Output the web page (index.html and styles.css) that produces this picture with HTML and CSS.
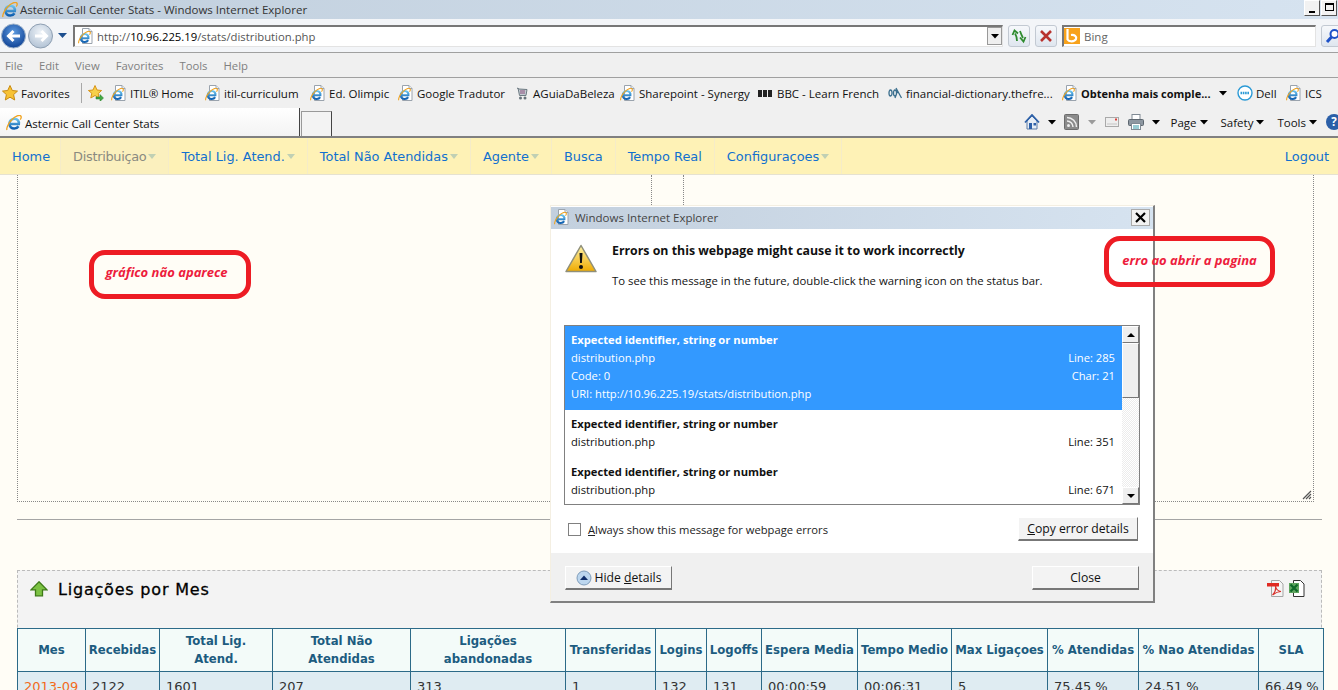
FILE: index.html
```html
<!DOCTYPE html>
<html>
<head>
    <meta charset="utf-8">
    <title>Asternic Call Center Stats</title>
    <link rel="stylesheet" href="styles.css">
</head>
<body>
    <svg class="defs" width="0" height="0">
        <defs>
            <linearGradient id="blue_e" x1="0" y1="0" x2="0" y2="1">
                <stop offset="0" stop-color="#6cc4ee"/>
                <stop offset="1" stop-color="#0f5fb0"/>
            </linearGradient>
            <symbol id="ie_e" viewBox="0 0 16 16">
                <path d="M3.200 9h9.600c.5-3-1.400-5.300-4.300-5.300C5.600 3.700 3.400 6 3.400 8.800c0 2.900 2.200 4.700 4.900 4.700 1.900 0 3.300-.8 4.200-2.200" fill="none" stroke="url(#blue_e)" stroke-width="2.600"/>
                <path d="M1 15c-1-1.500 1.500-7 5-10.500C9.500 1 13.500-.5 14.800 1c.8 1 .2 2.500-.6 3.600" fill="none" stroke="#f0a21e" stroke-width="1.300"/>
            </symbol>
            <symbol id="ie_page" viewBox="0 0 16 16">
                <path d="M4.500.5h6.500l3 3v12h-9.500z" fill="#fff" stroke="#9aa3ad"/>
                <path d="M11 .5v3h3" fill="#e8edf2" stroke="#9aa3ad"/>
                <use href="#ie_e" x="0" y="3" width="13" height="13"/>
            </symbol>
            <symbol id="caret" viewBox="0 0 8 5">
                <path d="M0 0h8L4 4.500z" fill="#000"/>
            </symbol>
        </defs>
    </svg>

    <div class="titlebar">
        <svg class="ico16 title-ico"><use href="#ie_e"/></svg>
        <span class="title-text">Asternic Call Center Stats - Windows Internet Explorer</span>
        <div class="winbtns">
            <span class="winbtn"><i class="min-mark"></i></span>
            <span class="winbtn"><i class="restore-mark"></i></span>
        </div>
    </div>

    <div class="addressbar">
        <svg class="nav-arrows" width="72" height="30" viewBox="0 0 72 30">
            <defs>
                <radialGradient id="back_fill" cx=".5" cy=".35" r=".7">
                    <stop offset="0" stop-color="#5d9be0"/>
                    <stop offset="1" stop-color="#0b3d91"/>
                </radialGradient>
                <radialGradient id="fwd_fill" cx=".5" cy=".35" r=".7">
                    <stop offset="0" stop-color="#eef3f8"/>
                    <stop offset="1" stop-color="#aebfd2"/>
                </radialGradient>
            </defs>
            <circle cx="12.500" cy="15" r="12" fill="url(#back_fill)" stroke="#9fb3c9"/>
            <path d="M19 15H8m4.500-5L7.500 15l5 5" fill="none" stroke="#fff" stroke-width="3"/>
            <circle cx="39.500" cy="15" r="12" fill="url(#fwd_fill)" stroke="#8e9fb2"/>
            <path d="M34 15h11m-4.500-5l5 5-5 5" fill="none" stroke="#fff" stroke-width="3"/>
            <path d="M57 12h9l-4.500 5z" fill="#1d4f8f"/>
        </svg>
        <div class="urlbox">
            <svg class="ico16"><use href="#ie_page"/></svg>
            <span class="url"><span class="url-dim">http://</span>10.96.225.19<span class="url-dim">/stats/distribution.php</span></span>
            <span class="combo-btn"><svg width="8" height="5"><use href="#caret"/></svg></span>
        </div>
        <span class="toolbtn">
            <svg width="16" height="16" viewBox="0 0 16 16"><path d="M6 13C6 9 5 7 4 5.500M1.500 7L3.500 2.500 7 5.500M9 3c1 3 2 5 3 7M9 9.500l3.500 4 2-4.500" fill="none" stroke="#2e8b2e" stroke-width="1.800"/></svg>
        </span>
        <span class="toolbtn">
            <svg width="14" height="14" viewBox="0 0 14 14"><path d="M2 2l10 10M12 2L2 12" stroke="#b8322e" stroke-width="2.600"/></svg>
        </span>
        <div class="searchbox">
            <span class="bing-logo">
                <svg width="16" height="16" viewBox="0 0 16 16"><path d="M3.500 1v10.500c1.500 2.500 7 2.500 8.500-.5 1-2.500-1.500-4.500-5-4" fill="none" stroke="#fff" stroke-width="2.200"/></svg>
            </span>
            <span class="bing-text">Bing</span>
        </div>
        <span class="toolbtn go-btn">
            <svg width="16" height="16" viewBox="0 0 16 16"><circle cx="9.500" cy="6" r="4" fill="#fff" stroke="#1c50c8" stroke-width="2"/><path d="M6.500 9L2 14" stroke="#1c50c8" stroke-width="3"/></svg>
        </span>
    </div>

    <div class="menubar">
        <span>File</span><span>Edit</span><span>View</span><span>Favorites</span><span>Tools</span><span>Help</span>
    </div>

    <div class="favbar">
        <span class="fav">
            <svg class="ico16" viewBox="0 0 16 16"><path d="M8 .5l2.300 5 5.200.6-3.900 3.500 1.100 5.400L8 12.200 3.300 15l1.100-5.400L.5 6.100l5.200-.6z" fill="#f7c234" stroke="#c98a10"/></svg>
            <span>Favorites</span>
        </span>
        <span class="fav-sep"></span>
        <svg class="ico16" viewBox="0 0 16 16"><path d="M7 .5l2 4.500 4.600.5-3.400 3.100 1 4.800L7 10.500 2.800 13l1-4.800L.4 5.500 5 5z" fill="#f7d04a" stroke="#d89418"/><path d="M8 12h4v-2.500l3.500 3.500-3.500 3.500V14H8z" fill="#43a843" stroke="#2b7a2b" stroke-width=".5"/></svg>
        <span class="fav"><svg class="ico16"><use href="#ie_page"/></svg><span>ITIL® Home</span></span>
        <span class="fav"><svg class="ico16"><use href="#ie_page"/></svg><span>itil-curriculum</span></span>
        <span class="fav"><svg class="ico16"><use href="#ie_page"/></svg><span>Ed. Olimpic</span></span>
        <span class="fav"><svg class="ico16"><use href="#ie_page"/></svg><span>Google Tradutor</span></span>
        <span class="fav">
            <svg class="ico16" viewBox="0 0 16 16"><path d="M3 3l2 1 8 .5-1 6H5.500L4 3" fill="#c3ccd2" stroke="#6d7a82"/><path d="M6 6h5M6 8h5" stroke="#8c4f7e"/><circle cx="6.500" cy="13" r="1.500" fill="#66727a"/><circle cx="11" cy="13" r="1.500" fill="#66727a"/></svg>
            <span>AGuiaDaBeleza</span>
        </span>
        <span class="fav"><svg class="ico16"><use href="#ie_page"/></svg><span>Sharepoint - Synergy</span></span>
        <span class="fav">
            <span class="bbc"><i></i><i></i><i></i></span>
            <span>BBC - Learn French</span>
        </span>
        <span class="fav">
            <svg class="ico16" viewBox="0 0 16 16"><path d="M3.500 5c-2 0-2 6 0 6s2-6 0-6zM8 5C6 5 6 11 8 11s2-6 0-6zM9 3l5.500 10M10.500 6L8 13" fill="none" stroke="#3b6f8e" stroke-width="1.300"/></svg>
            <span>financial-dictionary.thefre...</span>
        </span>
        <span class="fav"><svg class="ico16"><use href="#ie_page"/></svg><strong>Obtenha mais comple...</strong></span>
        <svg class="caret" width="8" height="5"><use href="#caret"/></svg>
        <span class="fav">
            <svg class="ico16" viewBox="0 0 16 16"><circle cx="8" cy="8" r="7" fill="#fff" stroke="#2a9ad6" stroke-width="1.400"/><path d="M3.500 8h9" stroke="#2a9ad6" stroke-width="2.400" stroke-dasharray="1.600 .7"/></svg>
            <span>Dell</span>
        </span>
        <span class="fav"><svg class="ico16"><use href="#ie_page"/></svg><span>ICS</span></span>
    </div>

    <div class="tabbar">
        <div class="tab">
            <svg class="ico16"><use href="#ie_e"/></svg>
            <span>Asternic Call Center Stats</span>
        </div>
        <div class="newtab"></div>
        <div class="commands">
            <svg class="ico16 cmd-ico" viewBox="0 0 16 16"><path d="M3 7v8h10V7L8 2z" fill="#e6edf5" stroke="#5a7ba5"/><path d="M1 8.500l7-7.500 7 7.500" fill="none" stroke="#2d60a8" stroke-width="1.800"/><rect x="5" y="9" width="3" height="6" fill="#2d60a8"/><rect x="9.500" y="9" width="2.500" height="2.500" fill="#2d60a8"/></svg>
            <svg class="caret" width="8" height="5"><use href="#caret"/></svg>
            <svg class="ico16 cmd-ico" viewBox="0 0 16 16"><rect x=".5" y=".5" width="14" height="15" rx="1" fill="#8b8b8b" stroke="#6c6c6c"/><circle cx="4.500" cy="11.500" r="1.500" fill="#eee"/><path d="M3 7a6 6 0 0 1 6 6M3 3.500A9.500 9.500 0 0 1 12.500 13" fill="none" stroke="#eee" stroke-width="1.500"/></svg>
            <svg class="caret caret-off" width="8" height="5"><use href="#caret"/></svg>
            <svg class="ico16 cmd-ico" viewBox="0 0 16 16"><rect x="1.500" y="3.500" width="13" height="9" fill="#eee" stroke="#a9a9a9"/><path d="M3 10h10" stroke="#c4c4c4"/><rect x="11" y="4.500" width="2" height="2" fill="#d8403a"/></svg>
            <svg class="ico16 cmd-ico" viewBox="0 0 16 16"><rect x="4" y=".5" width="8" height="5" fill="#fff" stroke="#808a94"/><rect x=".5" y="5.500" width="15" height="6" rx="1" fill="#8d97a1" stroke="#5d666f"/><rect x="3.500" y="9.500" width="9" height="6" fill="#fff" stroke="#808a94"/><path d="M5 12h6M5 14h6" stroke="#39a"/></svg>
            <svg class="caret" width="8" height="5"><use href="#caret"/></svg>
            <span class="cmd cmd-first">Page<svg class="caret" width="8" height="5"><use href="#caret"/></svg></span>
            <span class="cmd">Safety<svg class="caret" width="8" height="5"><use href="#caret"/></svg></span>
            <span class="cmd">Tools<svg class="caret" width="8" height="5"><use href="#caret"/></svg></span>
            <span class="help-ico">?</span>
        </div>
    </div>

    <nav class="topnav">
        <a class="nav-item nav-home" href="#">Home</a>
        <a class="nav-item nav-off has-sub" href="#">Distribuiçao</a>
        <a class="nav-item has-sub" href="#">Total Lig. Atend.</a>
        <a class="nav-item has-sub" href="#">Total Não Atendidas</a>
        <a class="nav-item has-sub" href="#">Agente</a>
        <a class="nav-item" href="#">Busca</a>
        <a class="nav-item" href="#">Tempo Real</a>
        <a class="nav-item has-sub" href="#">Configuraçoes</a>
        <a class="logout" href="#">Logout</a>
    </nav>

    <div class="page">
        <div class="chart-box">
            <div class="chart-tab"></div>
            <svg class="grip" width="10" height="10" viewBox="0 0 10 10"><path d="M9 1L1 9M9 4L4 9M9 7L7 9" stroke="#555" stroke-width="1.200"/></svg>
        </div>
        <hr class="divider">
        <section class="panel">
            <div class="panel-head">
                <svg class="up-ico" width="18" height="16" viewBox="0 0 18 16"><path d="M9 .8l8 8h-4.500v6h-7v-6H1z" fill="#7cc243" stroke="#3d7a16" stroke-width="1.300"/></svg>
                <h2>Ligações por Mes</h2>
                <div class="export">
                    <svg width="17" height="17" viewBox="0 0 17 17"><path d="M4.500.5h8l3.500 3.500v12.500H4.500z" fill="#f4f4f4" stroke="#a5a5a5"/><rect x="0" y="3" width="12" height="3.500" fill="#e02a22"/><path d="M5.500 15c2-2 3.500-6 3-9 .5 3 2.500 5 5.500 5.500-3 0-6 1.500-8.500 3.500z" fill="none" stroke="#d8322c" stroke-width="1.200"/></svg>
                    <svg width="17" height="17" viewBox="0 0 17 17"><path d="M5.500.5h7l3.500 3.500v12.500H5.500z" fill="#fff" stroke="#333"/><rect x="1" y="3" width="10" height="10" fill="#5fa55f"/><path d="M2.500 4.500l7 7M9.500 4.500l-7 7" stroke="#0f6a2a" stroke-width="2.200"/></svg>
                </div>
            </div>
            <table class="stats">
                <colgroup>
                    <col class="c-mes"><col class="c-rec"><col class="c-tot"><col class="c-nao"><col class="c-aba"><col class="c-tra"><col class="c-log"><col class="c-off"><col class="c-esp"><col class="c-tem"><col class="c-max"><col class="c-ate"><col class="c-pna"><col class="c-sla">
                </colgroup>
                <thead>
                    <tr>
                        <th>Mes</th><th>Recebidas</th><th>Total Lig.<br>Atend.</th><th>Total Não<br>Atendidas</th><th>Ligações<br>abandonadas</th><th>Transferidas</th><th>Logins</th><th>Logoffs</th><th>Espera Media</th><th>Tempo Medio</th><th>Max Ligaçoes</th><th>% Atendidas</th><th>% Nao Atendidas</th><th>SLA</th>
                    </tr>
                </thead>
                <tbody>
                    <tr>
                        <td class="month">2013-09</td><td>2122</td><td>1601</td><td>207</td><td>313</td><td>1</td><td>132</td><td>131</td><td>00:00:59</td><td>00:06:31</td><td>5</td><td>75.45 %</td><td>24.51 %</td><td>66.49 %</td>
                    </tr>
                </tbody>
            </table>
        </section>
    </div>

    <div class="note note-chart">gráfico não aparece</div>

    <div class="dialog">
        <div class="dlg-title">
            <svg class="ico16"><use href="#ie_page"/></svg>
            <span>Windows Internet Explorer</span>
            <span class="dlg-close">
                <svg width="11" height="11" viewBox="0 0 11 11"><path d="M1 1l9 9M10 1l-9 9" stroke="#000" stroke-width="2.200"/></svg>
            </span>
        </div>
        <div class="dlg-body">
            <div class="dlg-msg">
                <svg class="warn" width="32" height="30" viewBox="0 0 32 30">
                    <defs>
                        <linearGradient id="warn_fill" x1="0" y1="0" x2="0" y2="1">
                            <stop offset="0" stop-color="#fff3a8"/>
                            <stop offset="1" stop-color="#eeaa00"/>
                        </linearGradient>
                    </defs>
                    <path d="M16 1.500L31 27.500H1z" fill="url(#warn_fill)" stroke="#8f8f7a" stroke-linejoin="round" stroke-width="1.500"/>
                    <path d="M14.500 9h3l-.6 10h-1.800z" fill="#111"/>
                    <circle cx="16" cy="23" r="2" fill="#111"/>
                </svg>
                <div>
                    <h3>Errors on this webpage might cause it to work incorrectly</h3>
                    <p>To see this message in the future, double-click the warning icon on the status bar.</p>
                </div>
            </div>
            <div class="err-list">
                <div class="err-items">
                    <div class="err err-sel">
                        <b>Expected identifier, string or number</b>
                        <div class="err-row"><span>distribution.php</span><span>Line: 285</span></div>
                        <div class="err-row"><span>Code: 0</span><span>Char: 21</span></div>
                        <div class="err-row"><span>URI: http://10.96.225.19/stats/distribution.php</span></div>
                    </div>
                    <div class="err">
                        <b>Expected identifier, string or number</b>
                        <div class="err-row"><span>distribution.php</span><span>Line: 351</span></div>
                    </div>
                    <div class="err">
                        <b>Expected identifier, string or number</b>
                        <div class="err-row"><span>distribution.php</span><span>Line: 671</span></div>
                    </div>
                </div>
                <div class="scrollbar">
                    <span class="sb-btn"><i class="sb-up"></i></span>
                    <span class="sb-thumb"></span>
                    <span class="sb-track"></span>
                    <span class="sb-btn"><i class="sb-down"></i></span>
                </div>
            </div>
            <div class="dlg-opts">
                <span class="check"></span>
                <span class="check-label"><u>A</u>lways show this message for webpage errors</span>
                <button class="btn btn-copy" type="button"><u>C</u>opy error details</button>
            </div>
        </div>
        <div class="dlg-foot">
            <button class="btn btn-hide" type="button">
                <svg width="16" height="16" viewBox="0 0 16 16"><circle cx="8" cy="8" r="7" fill="#bcd6ee" stroke="#7f9dbb"/><path d="M4 10l4-4.500 4 4.500z" fill="#0f2f6b"/></svg>
                <span>Hide <u>d</u>etails</span>
            </button>
            <button class="btn btn-close" type="button">Close</button>
        </div>
    </div>

    <div class="note note-open">erro ao abrir a pagina</div>
</body>
</html>
```

FILE: styles.css
```css
* {
    box-sizing: border-box;
}

html, body {
    margin: 0;
    height: 690px;
    overflow: hidden;
}

body {
    position: relative;
    font-family: "Open Sans", "Noto Sans", sans-serif;
    font-size: 11.5px;
    color: #111;
    background-color: #f0f0f0;
}

.defs {
    position: absolute;
}

.ico16 {
    width: 16px;
    height: 16px;
    flex: none;
}

.caret {
    flex: none;
}

/* window chrome */
.titlebar {
    display: flex;
    align-items: center;
    height: 19px;
    padding-left: 2px;
    background: linear-gradient(to right, #c1cfdd, #d6e3f0);
}

.title-text {
    margin-left: 2px;
    color: #333;
}

.winbtns {
    display: flex;
    margin-left: auto;
    align-self: flex-start;
}

.winbtn {
    position: relative;
    display: block;
    width: 16px;
    height: 16px;
    margin-right: 1px;
    background: #f2f2f2;
    border: 1px solid #fff;
    border-right-color: #555;
    border-bottom-color: #555;
}

.min-mark {
    position: absolute;
    left: 4px;
    bottom: 2px;
    width: 6px;
    height: 2px;
    background: #000;
}

.restore-mark {
    position: absolute;
    left: 3px;
    top: 2px;
    width: 9px;
    height: 8px;
    border: 1px solid #000;
    border-top-width: 2px;
}

.addressbar {
    display: flex;
    align-items: center;
    height: 34px;
    padding-left: 1px;
    overflow: hidden;
    background: #f3f5f8;
    border-bottom: 1px solid #a0a0a0;
}

.nav-arrows {
    flex: none;
    width: 72px;
}

.urlbox {
    display: flex;
    align-items: center;
    flex: none;
    width: 930px;
    height: 22px;
    padding-left: 3px;
    background: #fff;
    border: 1px solid #e3e3e3;
    border-top: 2px solid #777;
    border-left: 2px solid #777;
}

.url {
    margin-left: 3px;
    font-size: 11.3px;
    color: #000;
}

.url-dim {
    color: #555;
}

.combo-btn {
    display: flex;
    align-items: center;
    justify-content: center;
    width: 15px;
    height: 18px;
    margin-left: auto;
    background: #efefef;
    border: 1px solid #999;
}

.toolbtn {
    display: flex;
    align-items: center;
    justify-content: center;
    flex: none;
    width: 22px;
    height: 22px;
    margin-left: 5px;
    background: linear-gradient(#f6f8fb, #dfe6ef);
    border: 1px solid #c2c9d2;
    border-radius: 3px;
}

.searchbox {
    display: flex;
    align-items: center;
    flex: none;
    width: 254px;
    height: 22px;
    margin-left: 5px;
    background: #fff;
    border: 1px solid #e3e3e3;
    border-top: 2px solid #777;
    border-left: 2px solid #777;
}

.bing-logo {
    display: flex;
    width: 16px;
    height: 16px;
    background: #f8a21b;
}

.bing-text {
    margin-left: 4px;
    color: #666;
}

.go-btn {
    width: 24px;
}

.menubar {
    display: flex;
    align-items: center;
    gap: 16px;
    height: 25px;
    padding-left: 5px;
    font-size: 11.3px;
    color: #808080;
    border-bottom: 1px solid #a0a0a0;
}

.favbar {
    display: grid;
    grid-template-columns: 79px 7px 23px 94px 105px 88px 116px 106px 138px 129px 175px 157px 18px 49px 50px;
    align-items: center;
    height: 30px;
    padding-left: 2px;
    white-space: nowrap;
}

.favbar strong {
    font-size: 11px;
}

.fav {
    display: flex;
    align-items: center;
    gap: 3px;
}

.fav-sep {
    width: 1px;
    height: 20px;
    background: #a8a8a8;
}

.bbc {
    display: flex;
    gap: 1px;
    width: 16px;
}

.bbc i {
    width: 4px;
    height: 7px;
    background: #222;
}

.tabbar {
    display: flex;
    align-items: flex-end;
    height: 30px;
    border-bottom: 2px solid #808080;
}

.tab {
    display: flex;
    align-items: center;
    gap: 3px;
    width: 300px;
    height: 28px;
    padding-top: 2px;
    padding-left: 6px;
    background: linear-gradient(#fff, #f3f3f3);
    border-right: 1px solid #444;
}

.newtab {
    width: 31px;
    height: 25px;
    margin-left: 1px;
    background: #f3f3f3;
    border: 1px solid #999;
    border-right-color: #444;
    border-bottom: 0;
}

.commands {
    display: flex;
    align-items: center;
    height: 28px;
    margin-left: auto;
    gap: 8px;
}

.cmd {
    display: flex;
    align-items: center;
    gap: 3px;
    margin-left: 5px;
}

.cmd-first {
    margin-left: 3px;
}

.help-ico {
    width: 16px;
    height: 16px;
    margin-right: -4px;
    margin-left: 1px;
    color: #fff;
    font-weight: bold;
    text-align: center;
    line-height: 16px;
    background: #2b5fa8;
    border-radius: 50%;
}

.caret-off {
    opacity: .35;
}

/* site nav */
.topnav {
    display: flex;
    height: 37px;
    font-family: "DejaVu Sans", sans-serif;
    font-size: 12.9px;
    background: #fef2b6;
    border-bottom: 1px solid #e6e2d0;
}

.topnav a {
    color: #1170cf;
    text-decoration: none;
}

.nav-item {
    display: flex;
    align-items: center;
    padding: 0 12px;
    border-right: 1px solid #f5ecc8;
}

.topnav .nav-home {
    padding-right: 10px;
}

.topnav .nav-off {
    color: #8a8a80;
    letter-spacing: -.3px;
    background: #fbf0be;
}

.has-sub::after {
    content: "";
    margin-left: 2px;
    border: 4px solid transparent;
    border-top: 5px solid #c0d0b4;
    border-bottom: 0;
}

.topnav .logout {
    align-self: center;
    margin-left: auto;
    margin-right: 9px;
}

/* page body */
.page {
    padding: 0 16px 0 17px;
    background: #fffdf6;
    height: 516px;
}

.chart-box {
    position: relative;
    height: 327px;
    margin-right: 8px;
    border: 1px dotted #888;
    border-top: 0;
}

.chart-tab {
    width: 33px;
    height: 30px;
    margin-left: 633px;
    border-left: 1px dotted #888;
    border-right: 1px dotted #888;
}

.grip {
    position: absolute;
    right: 1px;
    bottom: 1px;
}

.divider {
    height: 0;
    margin: 17px 0 50px;
    border: 0;
    border-top: 1px solid #a5a5a5;
}

.panel {
    background: #f3f3f3;
    border-top: 1px dashed #bbb;
    border-left: 1px dashed #bbb;
    border-right: 1px dashed #bbb;
}

.panel-head {
    display: flex;
    align-items: center;
    height: 57px;
    padding: 0 16px 21px 12px;
}

.panel-head h2 {
    margin: 0 0 0 10px;
    font-family: "DejaVu Sans", sans-serif;
    font-size: 16px;
    font-weight: normal;
    letter-spacing: .8px;
    color: #000;
    -webkit-text-stroke: .3px #000;
}

.export {
    display: flex;
    gap: 4px;
    margin-left: auto;
    margin-top: -2px;
}

.stats {
    width: 1306px;
    margin-left: -1px;
    table-layout: fixed;
    border-collapse: collapse;
    font-family: "DejaVu Sans", sans-serif;
    font-size: 13px;
}

.stats th, .stats td {
    border: 1px solid #2c6a88;
}

.stats th {
    height: 43px;
    padding: 0;
    font-size: 11.7px;
    line-height: 18px;
    color: #1c5c80;
    background: #f3fbf9;
}

.stats td {
    height: 30px;
    padding: 0 6px;
    color: #333;
    background: #dfecf2;
    white-space: nowrap;
}

.stats .month {
    color: #f26a1b;
}

.c-mes { width: 68px; }
.c-rec { width: 74px; }
.c-tot { width: 113px; }
.c-nao { width: 138px; }
.c-aba { width: 155px; }
.c-tra { width: 90px; }
.c-log { width: 51px; }
.c-off { width: 55px; }
.c-esp { width: 96px; }
.c-tem { width: 94px; }
.c-max { width: 96px; }
.c-ate { width: 91px; }
.c-pna { width: 120px; }
.c-sla { width: 65px; }

/* hand drawn notes on the screenshot */
.note {
    position: absolute;
    display: flex;
    align-items: center;
    justify-content: center;
    font-family: "Open Sans", sans-serif;
    font-size: 13px;
    font-style: italic;
    font-weight: bold;
    color: #ed1c3c;
    border: 5px solid #ed1c24;
    border-radius: 16px;
}

.note-chart {
    left: 89px;
    top: 250px;
    width: 162px;
    height: 49px;
    padding-bottom: 5px;
    padding-right: 7px;
}

.note-open {
    left: 1104px;
    top: 236px;
    width: 171px;
    height: 51px;
    padding-bottom: 3px;
}

/* error dialog */
.dialog {
    position: absolute;
    left: 550px;
    top: 205px;
    width: 605px;
    height: 398px;
    background: #fff;
    border: 1px solid #f4efe2;
    border-right: 2px solid #808080;
    border-bottom: 2px solid #808080;
}

.dlg-title {
    display: flex;
    align-items: center;
    gap: 5px;
    height: 22px;
    margin-top: 1px;
    padding-left: 3px;
    padding-bottom: 2px;
    color: #444;
    background: linear-gradient(to right, #c3d0de, #d6e3f0);
}

.dlg-close {
    display: flex;
    align-items: center;
    justify-content: center;
    width: 19px;
    height: 17px;
    margin-left: auto;
    margin-right: 3px;
    background: #f2f2f2;
    border: 1px solid #aaa;
}

.dlg-body {
    height: 324px;
    padding: 0 14px 0 13px;
}

.dlg-msg {
    display: flex;
    height: 96px;
    padding-top: 14px;
    padding-left: 1px;
}

.warn {
    flex: none;
    margin-top: 1px;
    margin-right: 15px;
}

.dlg-msg h3 {
    margin: 0 0 14px;
    font-size: 12.35px;
    line-height: 16px;
}

.dlg-msg p {
    margin: 0;
    font-size: 11.35px;
    line-height: 16px;
}

.err-list {
    display: flex;
    width: 576px;
    height: 180px;
    border: 1px solid #808080;
    overflow: hidden;
}

.err-items {
    flex: 1;
    font-size: 11.2px;
    line-height: 18px;
}

.err {
    padding: 5px 7px 7px 6px;
}

.err-sel {
    height: 84px;
    padding-bottom: 0;
    color: #fff;
    background: #3399ff;
}

.err b {
    display: block;
    font-size: 11.2px;
}

.err-row {
    display: flex;
    justify-content: space-between;
}

.scrollbar {
    display: flex;
    flex-direction: column;
    width: 17px;
    background: #f4f4f4;
}

.sb-btn, .sb-thumb {
    display: flex;
    align-items: center;
    justify-content: center;
    background: #efefef;
    border: 1px solid #fff;
    border-right-color: #777;
    border-bottom-color: #777;
}

.sb-btn {
    height: 17px;
    flex: none;
}

.sb-thumb {
    height: 55px;
    flex: none;
}

.sb-track {
    flex: 1;
    background: repeating-conic-gradient(#ececec 0 25%, #fff 0 50%) 0 0 / 2px 2px;
}

.sb-up, .sb-down {
    border: 4px solid transparent;
}

.sb-up {
    border-top: 0;
    border-bottom: 4px solid #000;
}

.sb-down {
    border-bottom: 0;
    border-top: 4px solid #000;
}

.dlg-opts {
    display: flex;
    align-items: center;
    height: 47px;
    padding-left: 4px;
}

.check {
    width: 13px;
    height: 13px;
    margin-top: 2px;
    background: #fff;
    border: 1px solid #808080;
}

.check-label {
    margin-top: 2px;
    margin-left: 7px;
    font-size: 11.2px;
    color: #222;
}

.btn {
    font: inherit;
    font-size: 12.2px;
    height: 24px;
    padding: 0;
    color: #111;
    background: #f3f3f3;
    border: 1px solid #fff;
    border-right-color: #777;
    border-bottom: 2px solid #777;
}

.btn-copy {
    width: 120px;
    margin-left: auto;
    margin-right: 1px;
}

.dlg-foot {
    display: flex;
    justify-content: space-between;
    align-items: center;
    height: 48px;
    padding: 2px 14px 0;
    background: #f0f0f0;
}

.btn-hide {
    display: flex;
    align-items: center;
    justify-content: center;
    gap: 3px;
    width: 107px;
}

.btn-close {
    width: 107px;
}
```
